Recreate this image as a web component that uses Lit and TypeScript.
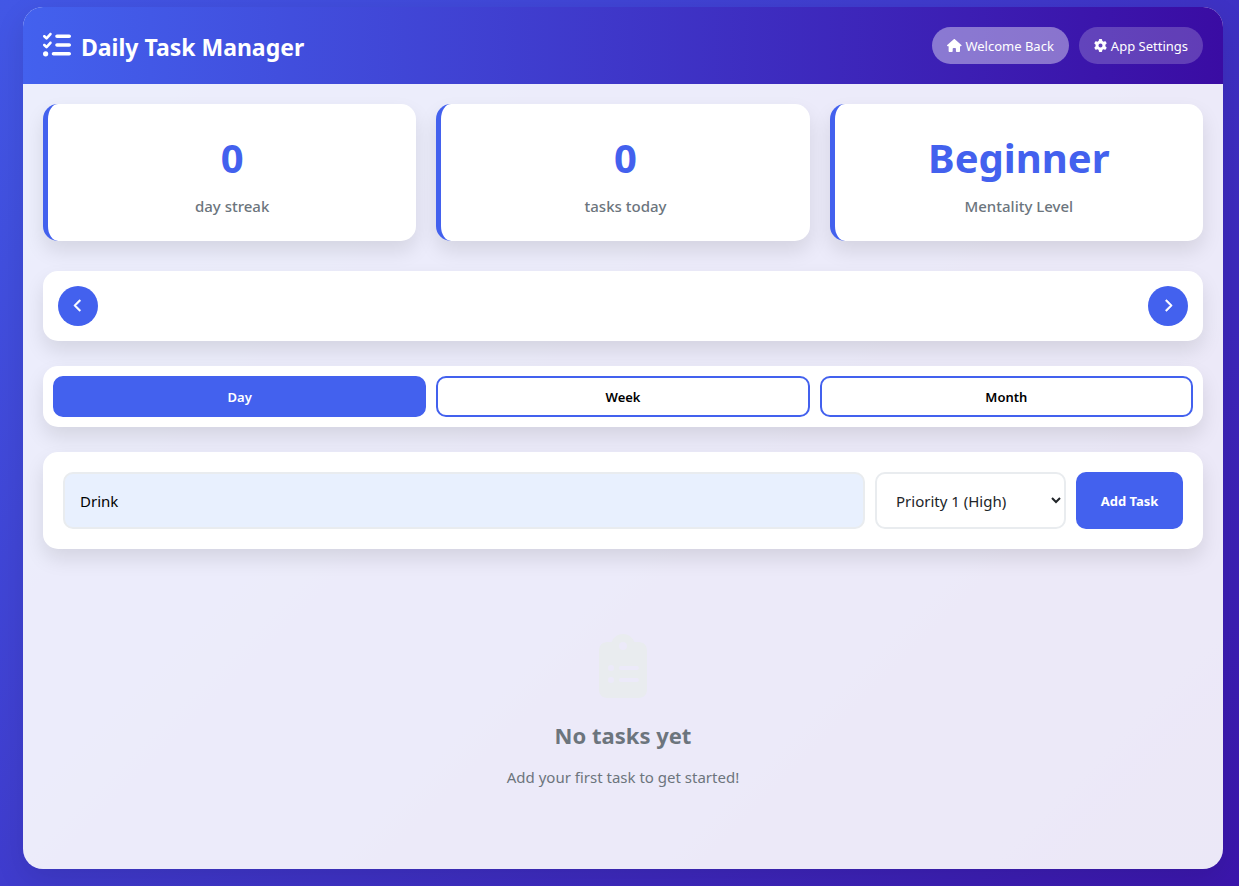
import { LitElement, html, css, svg } from "lit";
import { customElement, property, state } from "lit/decorators.js";
import { classMap } from "lit/directives/class-map.js";

const glyphs: Record<string, { w: number; d: string }> = {
  tasks: {
    w: 512,
    d: "M152.1 38.2c9.9 8.9 10.7 24 1.8 33.9l-72 80c-4.4 4.9-10.6 7.8-17.2 7.9s-12.9-2.4-17.6-7L7 113C-2.3 103.6-2.3 88.4 7 79s24.6-9.4 33.9 0l22.1 22.1 55.1-61.2c8.9-9.9 24-10.7 33.9-1.8zm0 160c9.9 8.9 10.7 24 1.8 33.9l-72 80c-4.4 4.9-10.6 7.8-17.2 7.9s-12.9-2.4-17.6-7L7 273c-9.4-9.4-9.4-24.6 0-33.9s24.6-9.4 33.9 0l22.1 22.1 55.1-61.2c8.9-9.9 24-10.7 33.9-1.8zM224 96c0-17.7 14.3-32 32-32H480c17.7 0 32 14.3 32 32s-14.3 32-32 32H256c-17.7 0-32-14.3-32-32zm0 160c0-17.7 14.3-32 32-32H480c17.7 0 32 14.3 32 32s-14.3 32-32 32H256c-17.7 0-32-14.3-32-32zM160 416c0-17.7 14.3-32 32-32H480c17.7 0 32 14.3 32 32s-14.3 32-32 32H192c-17.7 0-32-14.3-32-32zM48 368a48 48 0 1 1 0 96 48 48 0 1 1 0-96z",
  },
  home: {
    w: 576,
    d: "M575.8 255.5c0 18-15 32.1-32 32.1h-32l.7 160.2c0 2.7-.2 5.4-.5 8.1V472c0 22.1-17.9 40-40 40H456c-1.1 0-2.2 0-3.3-.1c-1.4 .1-2.8 .1-4.2 .1H416 392c-22.1 0-40-17.9-40-40V448 384c0-17.7-14.3-32-32-32H256c-17.7 0-32 14.3-32 32v64 24c0 22.1-17.9 40-40 40H160 128.1c-1.5 0-3-.1-4.5-.2c-1.2 .1-2.4 .2-3.6 .2H104c-22.1 0-40-17.9-40-40V360c0-.9 0-1.9 .1-2.8V287.6H32c-18 0-32-14-32-32.1c0-9 3-17 10-24L266.4 8c7-7 15-8 22-8s15 2 21 7L564.8 231.5c8 7 12 15 11 24z",
  },
  cog: {
    w: 512,
    d: "M495.9 166.6c3.2 8.7 .5 18.4-6.4 24.6l-43.3 39.4c1.1 8.3 1.7 16.8 1.7 25.4s-.6 17.1-1.7 25.4l43.3 39.4c6.9 6.2 9.6 15.9 6.4 24.6c-4.4 11.9-9.7 23.3-15.8 34.3l-4.7 8.1c-6.6 11-14 21.4-22.1 31.2c-5.9 7.2-15.7 9.6-24.5 6.8l-55.7-17.7c-13.4 10.3-28.2 18.9-44 25.4l-12.5 57.1c-2 9.1-9 16.3-18.2 17.8c-13.8 2.3-28 3.5-42.5 3.5s-28.7-1.2-42.5-3.5c-9.2-1.5-16.2-8.7-18.2-17.8l-12.5-57.1c-15.8-6.5-30.6-15.1-44-25.4L83.1 425.9c-8.8 2.8-18.6 .3-24.5-6.8c-8.1-9.8-15.5-20.2-22.1-31.2l-4.7-8.1c-6.1-11-11.4-22.4-15.8-34.3c-3.2-8.7-.5-18.4 6.4-24.6l43.3-39.4C64.6 273.1 64 264.6 64 256s.6-17.1 1.7-25.4L22.4 191.2c-6.9-6.2-9.6-15.9-6.4-24.6c4.4-11.9 9.7-23.3 15.8-34.3l4.7-8.1c6.6-11 14-21.4 22.1-31.2c5.9-7.2 15.7-9.6 24.5-6.8l55.7 17.7c13.4-10.3 28.2-18.9 44-25.4l12.5-57.1c2-9.1 9-16.3 18.2-17.8C227.3 1.2 241.5 0 256 0s28.7 1.2 42.5 3.5c9.2 1.5 16.2 8.7 18.2 17.8l12.5 57.1c15.8 6.5 30.6 15.1 44 25.4l55.7-17.7c8.8-2.8 18.6-.3 24.5 6.8c8.1 9.8 15.5 20.2 22.1 31.2l4.7 8.1c6.1 11 11.4 22.4 15.8 34.3zM256 336a80 80 0 1 0 0-160 80 80 0 1 0 0 160z",
  },
  left: {
    w: 320,
    d: "M9.4 233.4c-12.5 12.5-12.5 32.8 0 45.3l192 192c12.5 12.5 32.8 12.5 45.3 0s12.5-32.8 0-45.3L77.3 256 246.6 86.6c12.5-12.5 12.5-32.8 0-45.3s-32.8-12.5-45.3 0l-192 192z",
  },
  right: {
    w: 320,
    d: "M310.6 233.4c12.5 12.5 12.5 32.8 0 45.3l-192 192c-12.5 12.5-32.8 12.5-45.3 0s-12.5-32.8 0-45.3L242.7 256 73.4 86.6c-12.5-12.5-12.5-32.8 0-45.3s32.8-12.5 45.3 0l192 192z",
  },
  clipboard: {
    w: 384,
    d: "M192 0c-41.8 0-77.4 26.7-90.5 64H64C28.7 64 0 92.7 0 128V448c0 35.3 28.7 64 64 64H320c35.3 0 64-28.7 64-64V128c0-35.3-28.7-64-64-64H282.5C269.4 26.7 233.8 0 192 0zm0 64a32 32 0 1 1 0 64 32 32 0 1 1 0-64zM72 272a24 24 0 1 1 48 0 24 24 0 1 1 -48 0zm104-16H304c8.8 0 16 7.2 16 16s-7.2 16-16 16H176c-8.8 0-16-7.2-16-16s7.2-16 16-16zM72 368a24 24 0 1 1 48 0 24 24 0 1 1 -48 0zm88 0c0-8.8 7.2-16 16-16H304c8.8 0 16 7.2 16 16s-7.2 16-16 16H176c-8.8 0-16-7.2-16-16z",
  },
};

@customElement("task-icon")
export class TaskIcon extends LitElement {
  @property() name = "tasks";

  static styles = css`
    :host {
      display: inline-flex;
      flex: none;
    }
    .glyph {
      display: block;
      height: 1em;
      fill: currentColor;
      overflow: visible;
    }
    .bold {
      stroke: currentColor;
      stroke-width: 24;
    }
  `;

  render() {
    const g = glyphs[this.name];
    const bold = this.name === "left" || this.name === "right";
    return html`<svg
      class=${classMap({ glyph: true, bold })}
      viewBox="0 0 ${g.w} 512"
      aria-hidden="true"
    >
      ${svg`<path d=${g.d}></path>`}
    </svg>`;
  }
}

@customElement("stat-card")
export class StatCard extends LitElement {
  @property() value = "";
  @property() label = "";

  static styles = css`
    :host {
      display: block;
    }
    .card {
      padding: 25px 20px 24px;
      border-left: 5px solid #4361ee;
      border-radius: 15px;
      background: #fff;
      box-shadow: 0 10px 20px rgba(0, 0, 0, 0.1);
      text-align: center;
    }
    .value {
      color: #4361ee;
      font-size: 40px;
      font-weight: 700;
      line-height: 58px;
    }
    .label {
      margin-top: 8px;
      color: #6c757d;
      font-size: 15px;
      font-weight: 500;
      line-height: 22px;
    }
  `;

  render() {
    return html`<div class="card">
      <div class="value">${this.value}</div>
      <div class="label">${this.label}</div>
    </div>`;
  }
}

@customElement("app-root")
export class AppRoot extends LitElement {
  @state() private view = "Day";
  @state() private page = "Welcome Back";

  static styles = css`
    :host {
      display: flex;
      box-sizing: border-box;
      min-height: 100vh;
      padding: 7px 16px 17px 23px;
      background: linear-gradient(135deg, #4361ee -15%, #3a0ca3 115%);
      color: #212529;
      font-family: "Noto Sans", "Open Sans", sans-serif;
      font-size: 16px;
    }
    * {
      box-sizing: border-box;
    }
    button,
    input,
    select {
      margin: 0;
      font-family: inherit;
    }
    button {
      cursor: pointer;
    }
    .shell {
      flex: 1;
      max-width: 1200px;
      margin: 0 auto;
      border-radius: 20px;
      background: rgba(255, 255, 255, 0.9);
      box-shadow: 0 10px 30px rgba(0, 0, 0, 0.1);
      overflow: hidden;
    }
    .top {
      display: flex;
      justify-content: space-between;
      align-items: center;
      padding: 20px;
      background: linear-gradient(90deg, #4361ee, #3a0ca3);
      color: #fff;
    }
    .brand {
      display: flex;
      align-items: flex-start;
      gap: 10px;
      margin: 0;
      padding-top: 4px;
      font-size: 23px;
      font-weight: 700;
      line-height: 33px;
    }
    .brand-icon {
      font-size: 28px;
    }
    .links {
      display: flex;
      gap: 10px;
    }
    .link {
      display: flex;
      align-items: center;
      gap: 4px;
      height: 37px;
      padding: 0 15px;
      border: 0;
      border-radius: 20px;
      background: rgba(255, 255, 255, 0.2);
      color: #fff;
      font-size: 13px;
    }
    .link.current {
      background: rgba(255, 255, 255, 0.4);
    }
    .content {
      padding: 20px;
    }
    .stats {
      display: grid;
      grid-template-columns: repeat(3, 1fr);
      gap: 20px;
      margin-bottom: 30px;
    }
    .panel {
      display: flex;
      gap: 10px;
      margin-bottom: 25px;
      border-radius: 15px;
      background: #fff;
      box-shadow: 0 10px 20px rgba(0, 0, 0, 0.1);
    }
    .dates {
      justify-content: space-between;
      padding: 15px;
    }
    .arrow {
      display: flex;
      align-items: center;
      justify-content: center;
      width: 40px;
      height: 40px;
      padding: 0 0 2px;
      border: 0;
      border-radius: 50%;
      background: #4361ee;
      color: #fff;
      font-size: 13px;
    }
    .views {
      padding: 10px;
    }
    .view {
      flex: 1;
      height: 41px;
      border: 2px solid #4361ee;
      border-radius: 10px;
      background: #fff;
      color: #000;
      font-size: 13px;
      font-weight: 600;
    }
    .view.current {
      background: #4361ee;
      color: #fff;
    }
    .entry {
      padding: 20px;
    }
    .field {
      height: 57px;
      padding: 15px;
      border: 2px solid #e9ecef;
      border-radius: 10px;
      background: #fff;
      color: #212529;
      font-size: 15px;
    }
    .text {
      flex: 1;
      min-width: 0;
      background: #e8f0fe;
      color: #000;
    }
    .priority {
      width: 191px;
    }
    .add {
      width: 107px;
      height: 57px;
      padding: 0;
      border: 0;
      border-radius: 10px;
      background: #4361ee;
      color: #fff;
      font-size: 13px;
      font-weight: 700;
    }
    .empty {
      display: flex;
      flex-direction: column;
      align-items: center;
      padding: 60px 20px 58px;
      color: #6c757d;
      text-align: center;
    }
    .empty-icon {
      margin-bottom: 20px;
      color: #e9ecef;
      font-size: 64px;
    }
    .empty-title {
      margin: 0 0 10px;
      font-size: 22px;
      font-weight: 700;
      line-height: 35px;
    }
    .empty-text {
      margin: 0;
      font-size: 15px;
      line-height: 28px;
    }
  `;

  private link(label: string, icon: string) {
    return html`<button
      type="button"
      class=${classMap({ link: true, current: this.page === label })}
      @click=${() => (this.page = label)}
    >
      <task-icon name=${icon}></task-icon>${label}
    </button>`;
  }

  render() {
    return html`
      <div class="shell">
        <header class="top">
          <h1 class="brand"><task-icon class="brand-icon" name="tasks"></task-icon>Daily Task Manager</h1>
          <nav class="links">
            ${this.link("Welcome Back", "home")} ${this.link("App Settings", "cog")}
          </nav>
        </header>
        <main class="content">
          <section class="stats">
            <stat-card value="0" label="day streak"></stat-card>
            <stat-card value="0" label="tasks today"></stat-card>
            <stat-card value="Beginner" label="Mentality Level"></stat-card>
          </section>
          <section class="panel dates">
            <button type="button" class="arrow" aria-label="Previous"><task-icon name="left"></task-icon></button>
            <button type="button" class="arrow" aria-label="Next"><task-icon name="right"></task-icon></button>
          </section>
          <section class="panel views">
            ${["Day", "Week", "Month"].map(
              (v) => html`<button
                type="button"
                class=${classMap({ view: true, current: this.view === v })}
                @click=${() => (this.view = v)}
              >
                ${v}
              </button>`
            )}
          </section>
          <form class="panel entry" @submit=${(e: Event) => e.preventDefault()}>
            <input class="field text" type="text" aria-label="Task" .value=${"Drink"} />
            <select class="field priority" aria-label="Priority">
              <option>Priority 1 (High)</option>
            </select>
            <button class="add" type="submit">Add Task</button>
          </form>
          <section class="empty">
            <task-icon class="empty-icon" name="clipboard"></task-icon>
            <h2 class="empty-title">No tasks yet</h2>
            <p class="empty-text">Add your first task to get started!</p>
          </section>
        </main>
      </div>
    `;
  }
}
